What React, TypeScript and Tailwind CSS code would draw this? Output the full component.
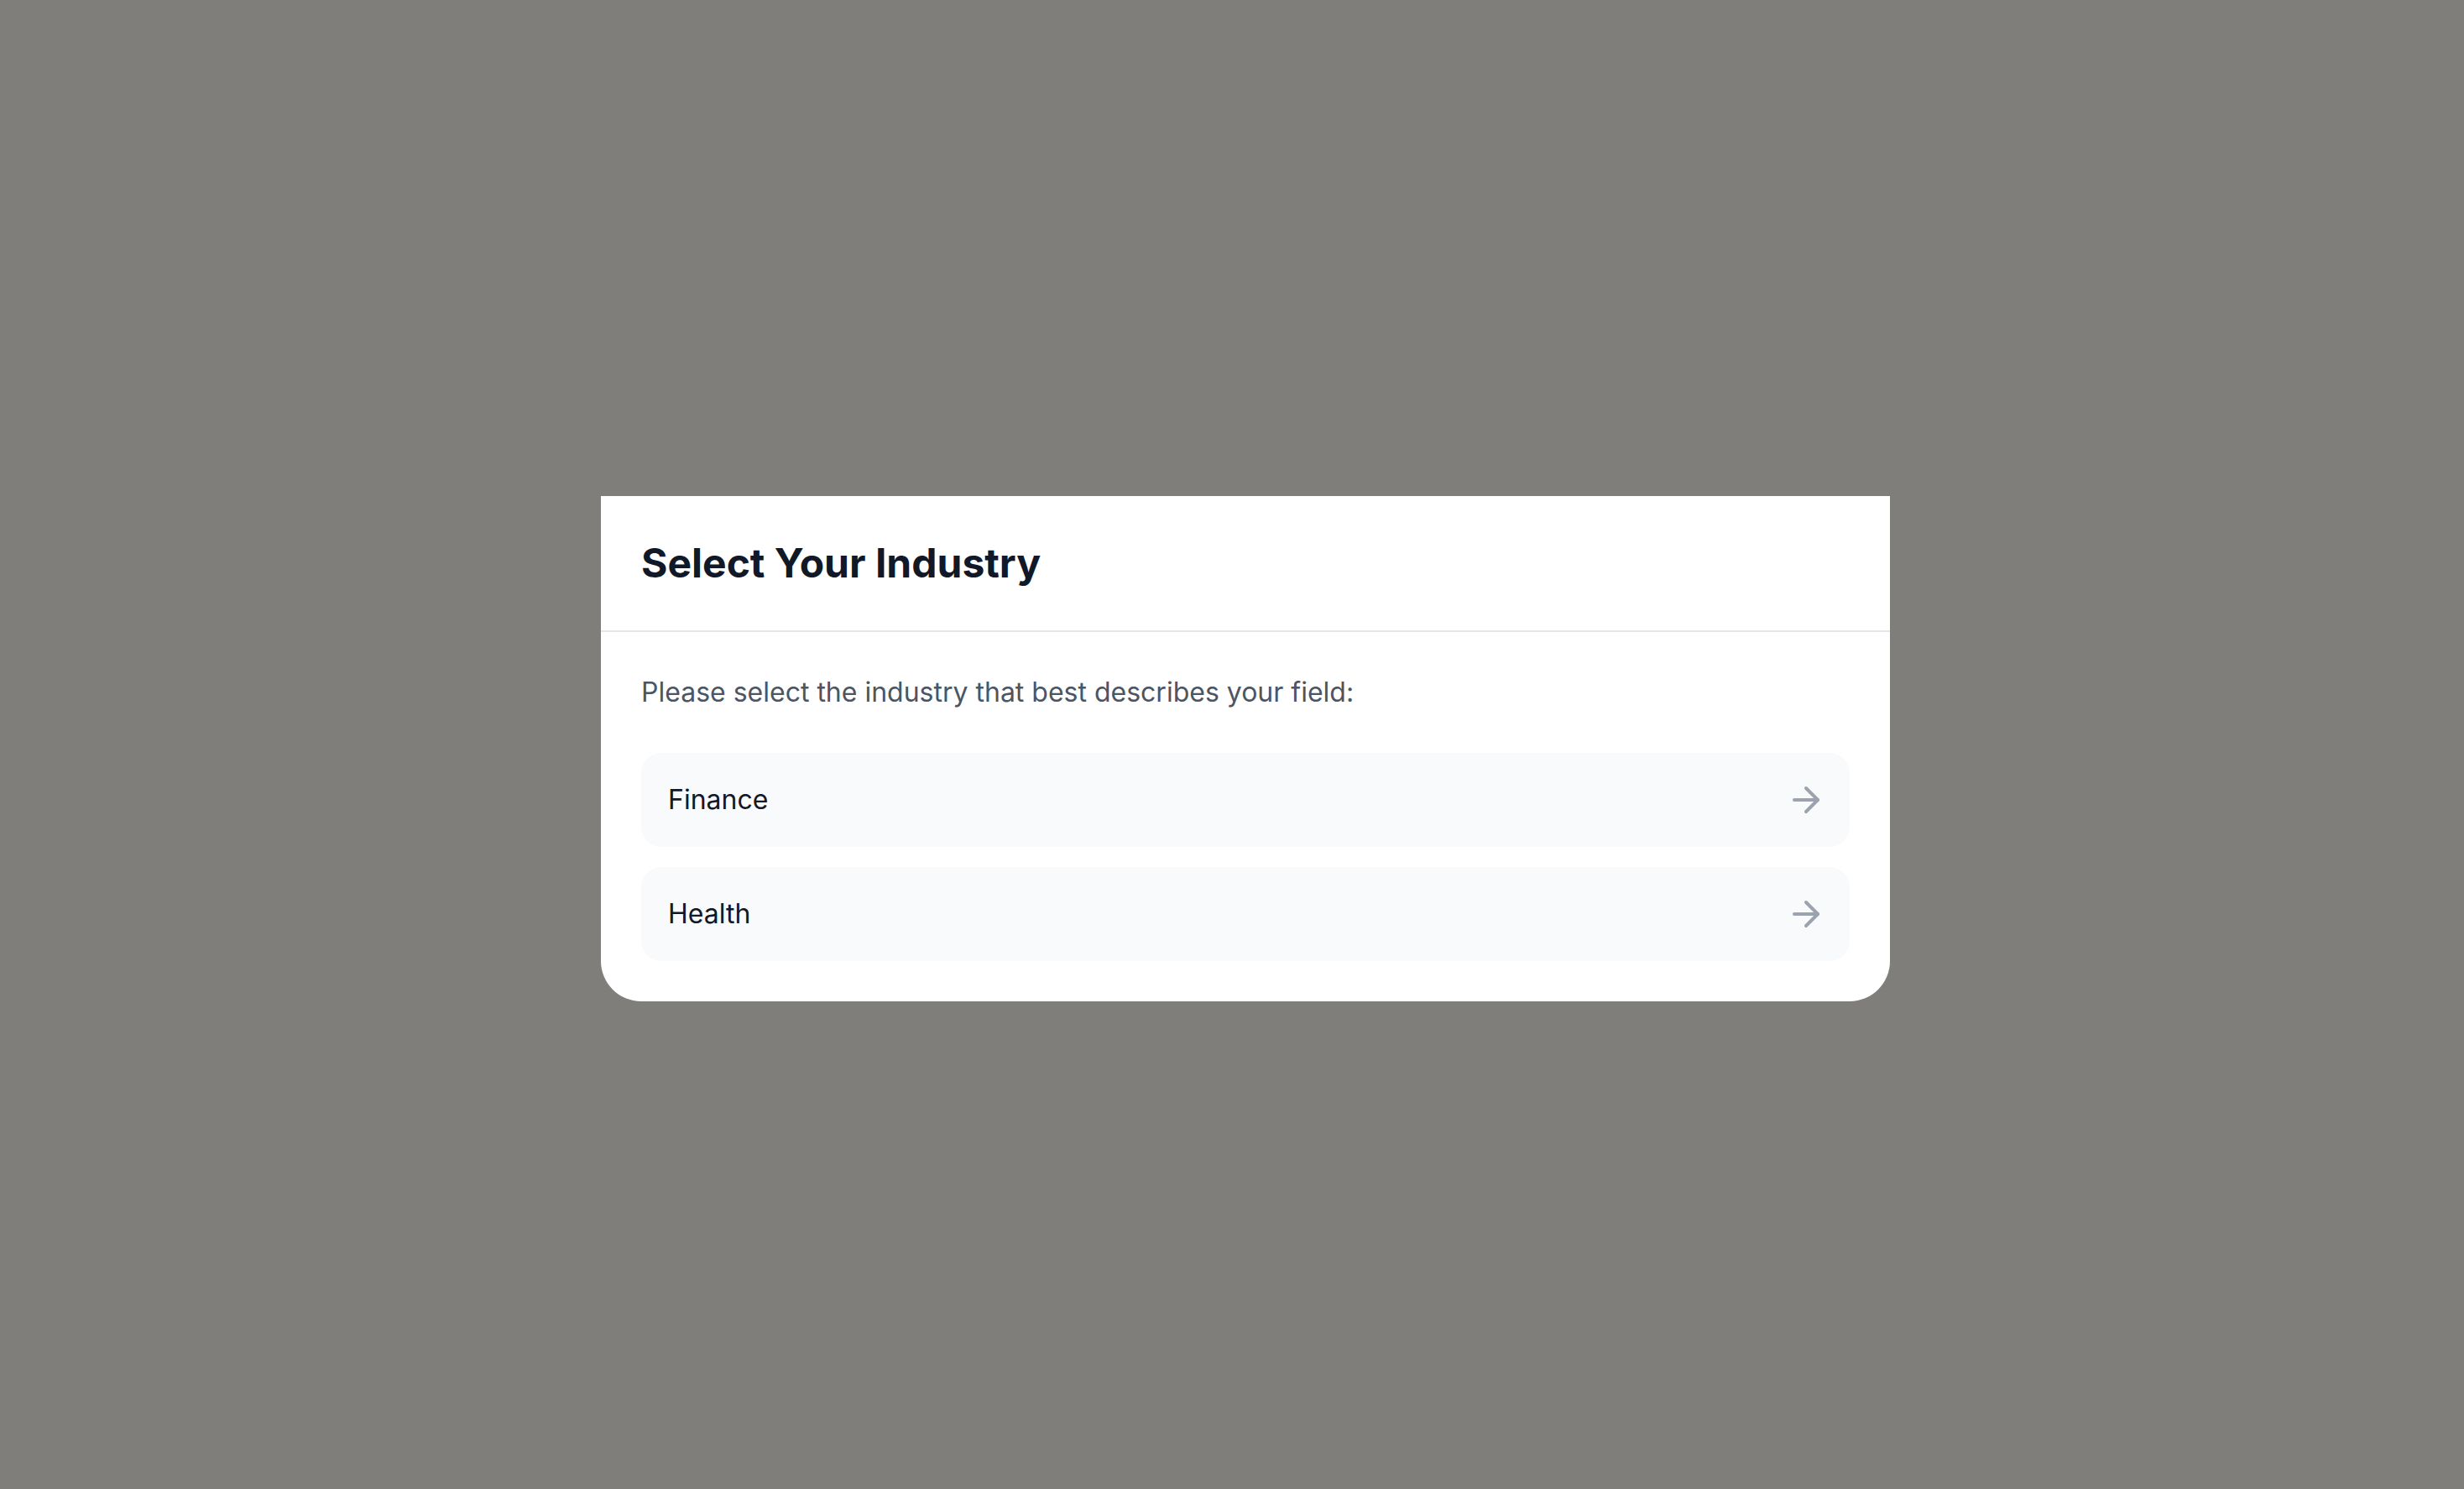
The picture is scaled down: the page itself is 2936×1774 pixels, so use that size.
import { ArrowRight } from "lucide-react";

const industries = ["Finance", "Health"];

export default function App() {
  return (
    <main
      className="min-h-screen w-full bg-[#7f7e7b] flex items-center justify-center pl-[32px] pt-[9px]"
      style={{ fontFamily: "Inter, 'Noto Sans', sans-serif" }}
    >
      <div className="w-[1536px] bg-white rounded-b-[48px] overflow-hidden">
        {/* Header */}
        <div className="px-12 py-12 border-b-2 border-[#e5e7eb]">
          <h2 className="text-[48px] leading-[64px] font-bold text-[#111827]">
            Select Your Industry
          </h2>
        </div>

        {/* Body */}
        <div className="p-12">
          <p className="text-[32px] leading-[48px] text-[#4b5563] mb-12">
            Please select the industry that best describes your field:
          </p>

          <div className="flex flex-col gap-6">
            {industries.map((item) => (
              <button
                key={item}
                className="w-full h-[112px] flex items-center justify-between pl-8 pr-7 bg-[#f9fafb] rounded-[24px] text-left"
              >
                <span className="text-[32px] leading-[48px] text-[#111827]">
                  {item}
                </span>
                <ArrowRight size={48} strokeWidth={2} className="text-[#9ca3af]" />
              </button>
            ))}
          </div>
        </div>
      </div>
    </main>
  );
}
